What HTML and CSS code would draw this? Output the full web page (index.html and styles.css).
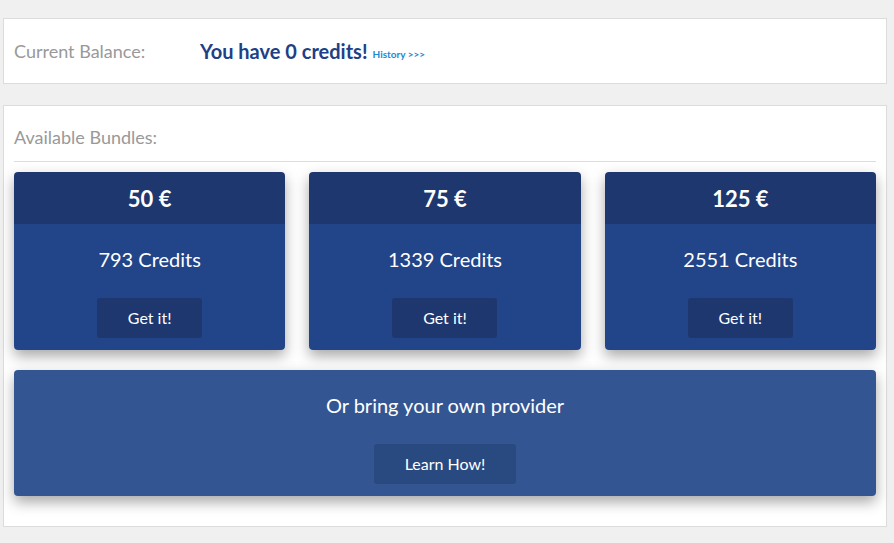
FILE: index.html
```html
<!DOCTYPE html>
<html>
<head>
<meta charset="utf-8">
<link rel="stylesheet" href="styles.css">
</head>
<body>
<div class="page">
  <section class="panel balance">
    <span class="label">Current Balance:</span>
    <span class="amount">You have 0 credits!</span>
    <a class="history" href="#">History &gt;&gt;&gt;</a>
  </section>
  <section class="panel bundles">
    <div class="label bundles-title">Available Bundles:</div>
    <div class="cards">
      <div class="card">
        <div class="card-head">50 €</div>
        <div class="card-body">
          <div class="credits">793 Credits</div>
          <button class="btn">Get it!</button>
        </div>
      </div>
      <div class="card">
        <div class="card-head">75 €</div>
        <div class="card-body">
          <div class="credits">1339 Credits</div>
          <button class="btn">Get it!</button>
        </div>
      </div>
      <div class="card">
        <div class="card-head">125 €</div>
        <div class="card-body">
          <div class="credits">2551 Credits</div>
          <button class="btn">Get it!</button>
        </div>
      </div>
    </div>
    <div class="provider">
      <div class="provider-text">Or bring your own provider</div>
      <button class="btn btn-learn">Learn How!</button>
    </div>
  </section>
</div>
</body>
</html>
```
FILE: styles.css
```css
html, body {
  margin: 0;
  padding: 0;
  background: #f0f0f0;
  font-family: Lato, "Open Sans", sans-serif;
}
.page {
  padding: 18px 7px 0 3px;
  display: flex;
  flex-direction: column;
  gap: 21px;
}
.panel {
  background: #fff;
  border: 1px solid #dcdcdc;
}
.balance {
  height: 64px;
  display: flex;
  align-items: center;
  padding: 0 10px;
}
.label {
  color: #999;
  font-size: 18px;
}
.balance .label {
  width: 186px;
}
.amount {
  color: #213f85;
  font-size: 20px;
  font-weight: 700;
}
.history {
  color: #1a8ad4;
  font-size: 10px;
  text-decoration: none;
  margin-left: 5px;
  margin-top: 6px;
  font-weight: 700;
}
.bundles {
  padding: 0 10px 30px 10px;
}
.bundles-title {
  height: 55px;
  line-height: 62px;
  border-bottom: 1px solid #ddd;
}
.cards {
  margin-top: 10px;
  display: grid;
  grid-template-columns: repeat(3, 1fr);
  gap: 24px;
}
.card {
  border-radius: 4px;
  overflow: hidden;
  box-shadow: 0 6px 14px rgba(0,0,0,0.35);
  color: #fff;
}
.card-head {
  background: #1e376f;
  height: 52px;
  display: flex;
  align-items: center;
  justify-content: center;
  font-size: 22px;
  font-weight: 700;
}
.card-body {
  background: #224489;
  height: 126px;
  display: flex;
  flex-direction: column;
  align-items: center;
}
.credits {
  font-size: 20px;
  margin-top: 22px;
  line-height: 26px;
}
.btn {
  margin-top: 26px;
  width: 105px;
  height: 40px;
  border: none;
  border-radius: 3px;
  background: #1e376f;
  color: #fff;
  font-family: Lato, "Open Sans", sans-serif;
  font-size: 16px;
  padding: 0 0 2px 0;
}
.provider {
  margin-top: 20px;
  height: 126px;
  background: #335692;
  border-radius: 4px;
  box-shadow: 0 6px 14px rgba(0,0,0,0.35);
  display: flex;
  flex-direction: column;
  align-items: center;
  color: #fff;
}
.provider-text {
  font-size: 20px;
  margin-top: 22px;
  line-height: 26px;
}
.btn-learn {
  width: 142px;
  margin-top: 26px;
  background: #294a80;
}
```
